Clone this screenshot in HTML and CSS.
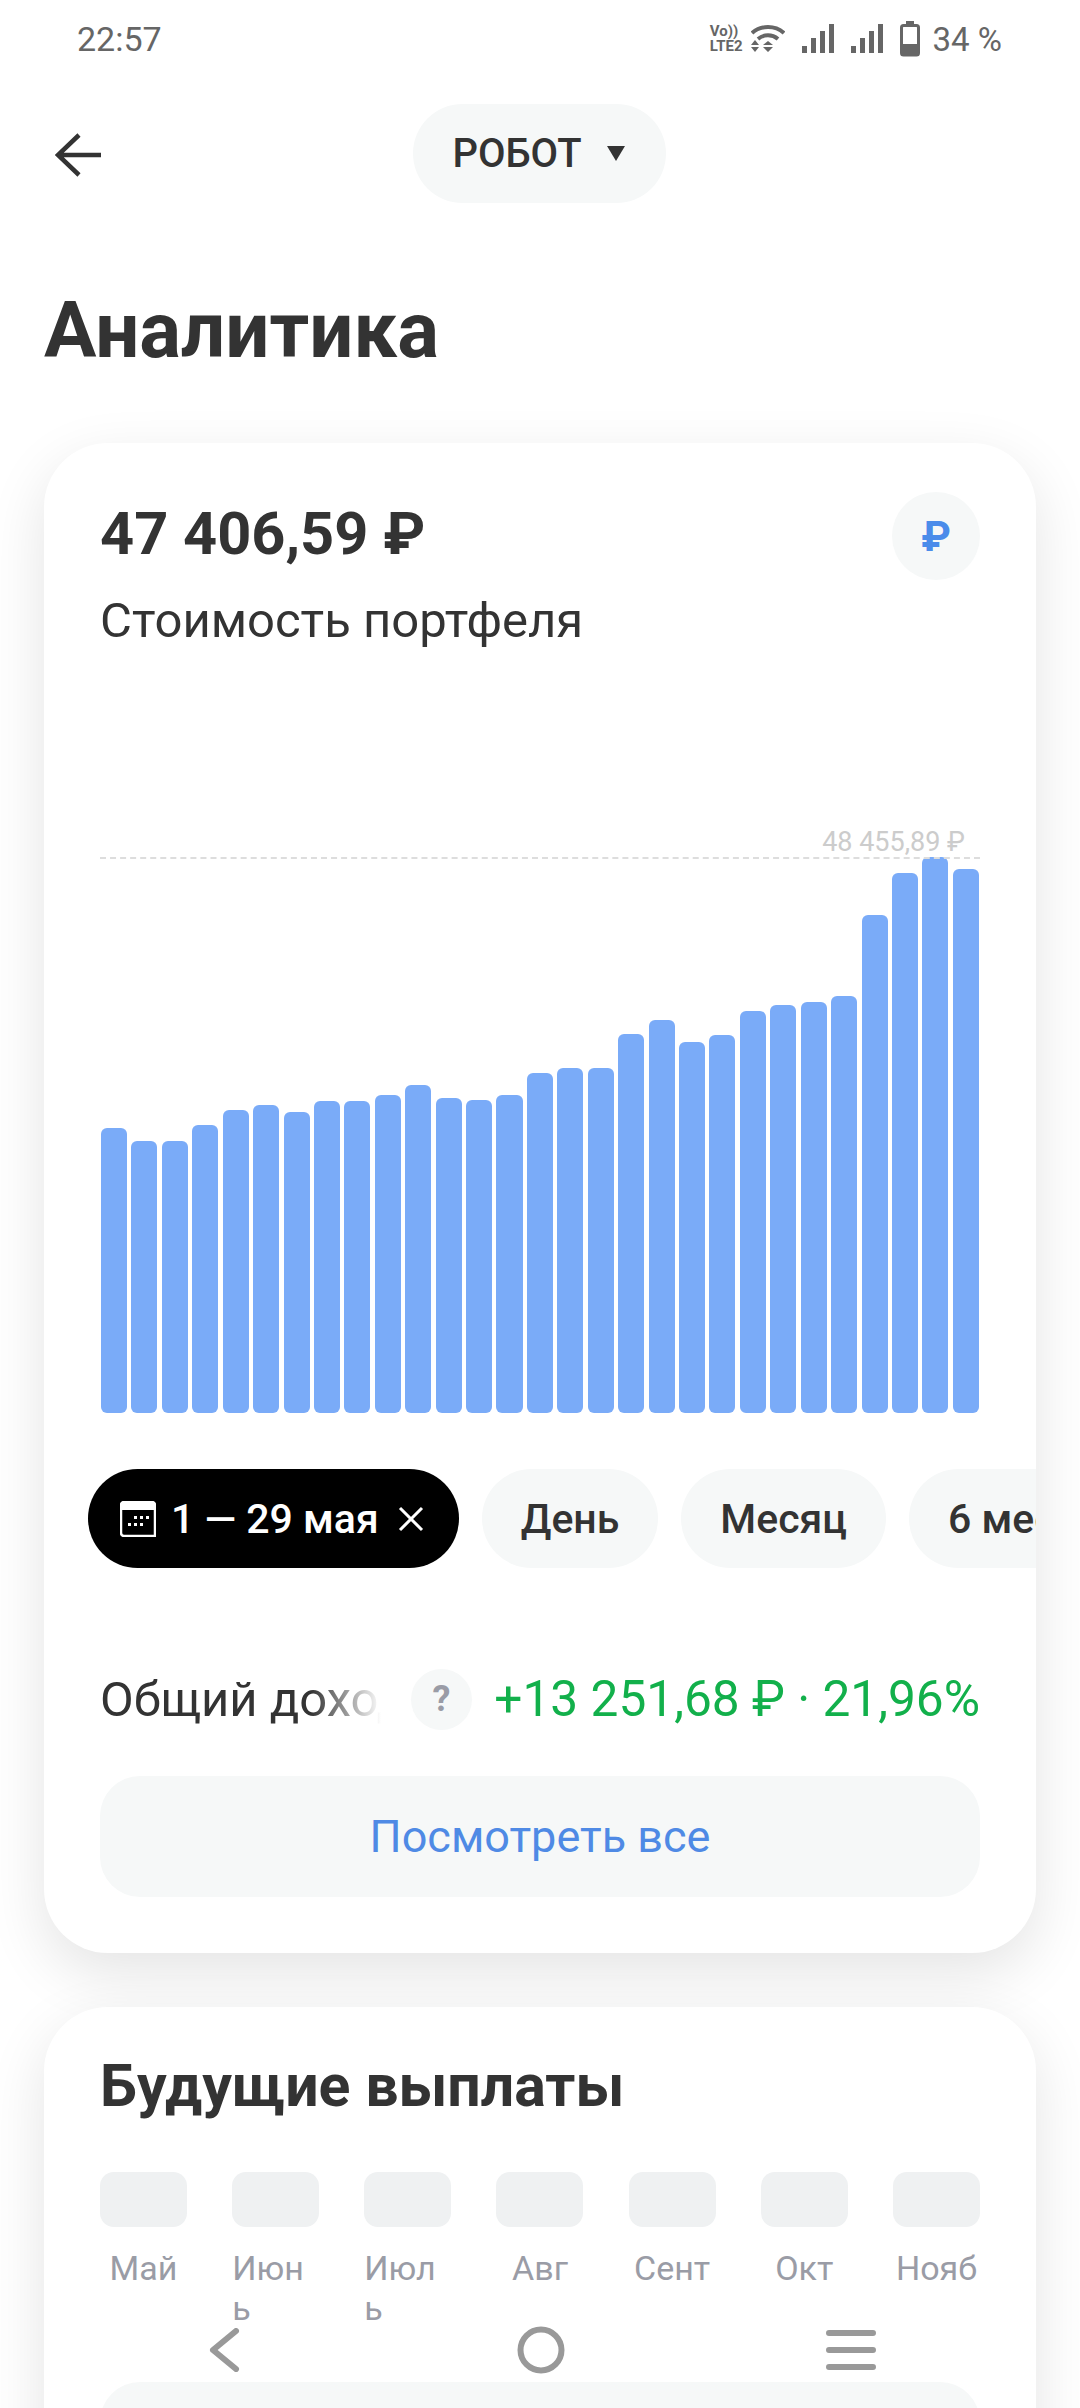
FILE: index.html
```html
<!DOCTYPE html>
<html lang="ru">
    <head>
        <meta charset="UTF-8">
        <title>Аналитика</title>
        <link rel="stylesheet" href="styles.css">
    </head>
    <body>
        <div class="screen">
            <div class="status">
                <span>22:57</span>
                <div class="status-icons">
                    <div class="volte"><span>Vo))</span><span>LTE2</span></div>
                    <svg class="wifi" width="34" height="30" viewBox="0 0 34 30">
                        <path d="M1 9C10 1 24 1 33 9" fill="none" stroke="#666" stroke-width="4"/>
                        <path d="M7 15C13 10 21 10 27 15" fill="none" stroke="#666" stroke-width="4"/>
                        <path d="M18 21L28 21L23 17Z M18 23L28 23L23 28Z" fill="#666" transform="translate(-6 0)"/>
                        <path d="M0 21L8 21L4 16Z M0 23L8 23L4 28Z" fill="#666"/>
                    </svg>
                    <svg class="signal" width="32" height="30" viewBox="0 0 32 30">
                        <rect x="0" y="22" width="5" height="7" fill="#666"/>
                        <rect x="9" y="14" width="5" height="15" fill="#666"/>
                        <rect x="18" y="7" width="5" height="22" fill="#666"/>
                        <rect x="27" y="0" width="5" height="29" fill="#666"/>
                    </svg>
                    <svg class="signal" width="32" height="30" viewBox="0 0 32 30">
                        <rect x="0" y="22" width="5" height="7" fill="#666"/>
                        <rect x="9" y="14" width="5" height="15" fill="#666"/>
                        <rect x="18" y="7" width="5" height="22" fill="#666"/>
                        <rect x="27" y="0" width="5" height="29" fill="#666"/>
                    </svg>
                    <svg class="battery" width="20" height="36" viewBox="0 0 20 36">
                        <rect x="6" y="0" width="8" height="4" fill="#666"/>
                        <rect x="1.5" y="4.5" width="17" height="29.5" rx="2" fill="none" stroke="#666" stroke-width="3"/>
                        <rect x="1" y="23" width="18" height="12" rx="2" fill="#666"/>
                    </svg>
                    <span class="percent">34 %</span>
                </div>
            </div>

            <div class="topbar">
                <svg class="back" width="46" height="44" viewBox="0 0 46 44">
                    <path d="M46 22H3M24 2L3 22L24 42" fill="none" stroke="#333" stroke-width="4.5"/>
                </svg>
                <div class="account">РОБОТ<i class="caret"></i></div>
            </div>

            <h1>Аналитика</h1>

            <div class="card portfolio">
                <div class="total-row">
                    <div>
                        <div class="total">47 406,59 ₽</div>
                        <div class="total-label">Стоимость портфеля</div>
                    </div>
                    <div class="currency">₽</div>
                </div>

                <div class="chart">
                    <div class="max-line"><span>48 455,89 ₽</span></div>
                    <div class="bar" style="height:285px"></div>
                    <div class="bar" style="height:272px"></div>
                    <div class="bar" style="height:272px"></div>
                    <div class="bar" style="height:288px"></div>
                    <div class="bar" style="height:303px"></div>
                    <div class="bar" style="height:308px"></div>
                    <div class="bar" style="height:301px"></div>
                    <div class="bar" style="height:312px"></div>
                    <div class="bar" style="height:312px"></div>
                    <div class="bar" style="height:318px"></div>
                    <div class="bar" style="height:328px"></div>
                    <div class="bar" style="height:315px"></div>
                    <div class="bar" style="height:313px"></div>
                    <div class="bar" style="height:318px"></div>
                    <div class="bar" style="height:340px"></div>
                    <div class="bar" style="height:345px"></div>
                    <div class="bar" style="height:345px"></div>
                    <div class="bar" style="height:379px"></div>
                    <div class="bar" style="height:393px"></div>
                    <div class="bar" style="height:371px"></div>
                    <div class="bar" style="height:378px"></div>
                    <div class="bar" style="height:402px"></div>
                    <div class="bar" style="height:408px"></div>
                    <div class="bar" style="height:411px"></div>
                    <div class="bar" style="height:417px"></div>
                    <div class="bar" style="height:498px"></div>
                    <div class="bar" style="height:540px"></div>
                    <div class="bar" style="height:556px"></div>
                    <div class="bar" style="height:544px"></div>
                </div>

                <div class="periods">
                    <div class="chip active">
                        <svg width="36" height="36" viewBox="0 0 36 36">
                            <path d="M4 1H32A3 3 0 0 1 35 4V35H4A3 3 0 0 1 1 32V4A3 3 0 0 1 4 1Z" fill="none" stroke="#fff" stroke-width="2.5"/>
                            <path d="M4 1H32A3 3 0 0 1 35 4V9H1V4A3 3 0 0 1 4 1Z" fill="#fff"/>
                            <path d="M14 15h3v3h-3zM20 15h3v3h-3zM26 15h3v3h-3zM8 22h3v3H8zM14 22h3v3h-3zM20 22h3v3h-3z" fill="#fff"/>
                        </svg>
                        <span>1 — 29 мая</span>
                        <svg class="chip-close" width="26" height="26" viewBox="0 0 26 26">
                            <path d="M2 2L24 24M24 2L2 24" fill="none" stroke="#fff" stroke-width="3"/>
                        </svg>
                    </div>
                    <div class="chip">День</div>
                    <div class="chip">Месяц</div>
                    <div class="chip">6 месяцев</div>
                </div>

                <div class="income">
                    <div class="income-label">Общий доход</div>
                    <div class="hint">?</div>
                    <div class="income-value">+13 251,68 ₽ · 21,96%</div>
                </div>

                <div class="show-all">Посмотреть все</div>
            </div>

            <div class="card payouts">
                <h2>Будущие выплаты</h2>
                <div class="months">
                    <div class="month"><div class="month-box"></div><div class="month-name">Май</div></div>
                    <div class="month"><div class="month-box"></div><div class="month-name wrapped">Июн<br>ь</div></div>
                    <div class="month"><div class="month-box"></div><div class="month-name wrapped">Июл<br>ь</div></div>
                    <div class="month"><div class="month-box"></div><div class="month-name">Авг</div></div>
                    <div class="month"><div class="month-box"></div><div class="month-name">Сент</div></div>
                    <div class="month"><div class="month-box"></div><div class="month-name">Окт</div></div>
                    <div class="month"><div class="month-box"></div><div class="month-name">Нояб</div></div>
                </div>
                <div class="payout-panel"></div>
            </div>

            <div class="navbar">
                <svg width="32" height="44" viewBox="0 0 32 44">
                    <path d="M28 3L5 22L28 41" fill="none" stroke="#999" stroke-width="6" stroke-linecap="round" stroke-linejoin="round"/>
                </svg>
                <svg class="nav-home" width="48" height="48" viewBox="0 0 48 48">
                    <circle cx="24" cy="24" r="20.5" fill="none" stroke="#999" stroke-width="6"/>
                </svg>
                <svg class="nav-menu" width="50" height="42" viewBox="0 0 50 42">
                    <path d="M3 4H47M3 21H47M3 38H47" fill="none" stroke="#999" stroke-width="6" stroke-linecap="round"/>
                </svg>
            </div>
        </div>
    </body>
</html>
```

FILE: styles.css
```css
* {
    box-sizing: border-box;
}
html, body {
    margin: 0;
    background: #fff;
}
.screen {
    position: relative;
    width: 1080px;
    height: 2408px;
    overflow: hidden;
    background: #fff;
    font-family: Roboto, "Noto Sans", sans-serif;
    color: #333;
}

/* status bar */
.status {
    display: flex;
    justify-content: space-between;
    align-items: center;
    height: 78px;
    padding: 0 78px 0 77px;
    font-size: 34px;
    color: #666;
}
.status-icons {
    display: flex;
    align-items: center;
    font-size: 33px;
}
.volte {
    display: flex;
    flex-direction: column;
    font-size: 15px;
    line-height: 15px;
    font-weight: 700;
    margin-right: 8px;
}
.wifi {
    margin-right: 17px;
}
.signal {
    margin-right: 17px;
}
.battery {
    margin-right: 13px;
}

/* header */
.topbar {
    position: relative;
    display: flex;
    justify-content: center;
    align-items: center;
    height: 99px;
    margin-top: 26px;
}
.back {
    position: absolute;
    left: 55px;
    top: 29px;
}
.account {
    display: flex;
    align-items: center;
    height: 99px;
    padding: 0 41px 0 39px;
    border-radius: 50px;
    background: #f6f8f8;
    font-size: 40px;
    font-weight: 500;
    margin-left: -1px;
}
.caret {
    width: 0;
    height: 0;
    margin-left: 25px;
    border-left: 9px solid transparent;
    border-right: 9px solid transparent;
    border-top: 15px solid #333;
}
h1 {
    margin: 83px 0 0 44px;
    font-size: 78px;
    line-height: 90px;
    font-weight: 700;
}

/* cards */
.card {
    margin: 0 44px;
    padding: 0 56px;
    border-radius: 64px;
    background: #fff;
    box-shadow: 0 20px 60px rgba(0, 0, 0, 0.11);
}
.portfolio {
    height: 1510px;
    margin-top: 67px;
    padding-top: 56px;
    overflow: hidden;
}
.total-row {
    display: flex;
    justify-content: space-between;
    height: 90px;
}
.total {
    font-size: 59.5px;
    line-height: 70px;
    font-weight: 700;
}
.total-label {
    margin-top: 24px;
    font-size: 49px;
    line-height: 56px;
}
.currency {
    display: flex;
    justify-content: center;
    align-items: center;
    width: 88px;
    height: 88px;
    margin-top: -7px;
    border-radius: 50%;
    background: #f6f8f8;
    color: #4a8cea;
    font-size: 42px;
    font-weight: 700;
}

/* chart */
.chart {
    position: relative;
    display: flex;
    align-items: flex-end;
    gap: 4.4px;
    height: 556px;
    margin-top: 268px;
    padding: 0 1px;
}
.bar {
    flex: 1;
    border-radius: 6px;
    background: #7aabf8;
}
.max-line {
    position: absolute;
    left: 0;
    right: 0;
    top: 0;
    border-top: 2px dashed #ddd;
}
.max-line span {
    position: absolute;
    right: 15px;
    bottom: 0;
    font-size: 27px;
    line-height: 34px;
    color: #ccc;
}

/* periods */
.periods {
    display: flex;
    gap: 23px;
    margin: 56px -56px 0 -12px;
    overflow: hidden;
}
.chip {
    display: flex;
    flex-shrink: 0;
    align-items: center;
    height: 99px;
    padding: 0 39px;
    border-radius: 50px;
    background: #f6f8f8;
    font-size: 41px;
    font-weight: 500;
    white-space: nowrap;
}
.chip.active {
    gap: 15px;
    padding: 0 35px 0 32px;
    background: #000;
    color: #fff;
}
.chip-close {
    margin-left: 4px;
}

/* income */
.income {
    display: flex;
    align-items: center;
    height: 62px;
    margin-top: 100px;
}
.income-label {
    position: relative;
    width: 281px;
    overflow: hidden;
    font-size: 49px;
    white-space: nowrap;
}
.income-label::after {
    content: "";
    position: absolute;
    right: 0;
    top: 0;
    bottom: 0;
    width: 70px;
    background: linear-gradient(to right, rgba(255, 255, 255, 0), #fff);
}
.hint {
    display: flex;
    justify-content: center;
    align-items: center;
    width: 61px;
    height: 61px;
    margin-left: 30px;
    border-radius: 50%;
    background: #f6f8f8;
    color: #9a9ca6;
    font-size: 36px;
    font-weight: 700;
}
.income-value {
    margin-left: auto;
    font-size: 49.6px;
    color: #12b04b;
    white-space: nowrap;
}
.show-all {
    display: flex;
    justify-content: center;
    align-items: center;
    height: 121px;
    margin-top: 46px;
    border-radius: 40px;
    background: #f6f8f8;
    color: #4f8ae5;
    font-size: 45px;
}

/* payouts */
.payouts {
    height: 500px;
    margin-top: 54px;
    padding-top: 44px;
}
h2 {
    margin: 0;
    font-size: 59px;
    line-height: 70px;
    font-weight: 700;
}
.months {
    display: flex;
    justify-content: space-between;
    margin-top: 51px;
}
.month {
    width: 87px;
}
.month-box {
    height: 55px;
    border-radius: 14px;
    background: #eff1f2;
}
.month-name {
    margin-top: 21px;
    font-size: 34px;
    line-height: 40px;
    color: #9a9ca6;
    text-align: center;
    white-space: nowrap;
}
.month-name.wrapped {
    text-align: left;
}
.payout-panel {
    height: 120px;
    margin-top: 54px;
    border-radius: 40px;
    background: #f6f8f8;
}

/* system navigation, drawn over the page */
.navbar {
    position: absolute;
    left: 208px;
    top: 2326px;
    display: flex;
    align-items: center;
}
.nav-home {
    margin-left: 277px;
}
.nav-menu {
    margin-left: 261px;
}
```
